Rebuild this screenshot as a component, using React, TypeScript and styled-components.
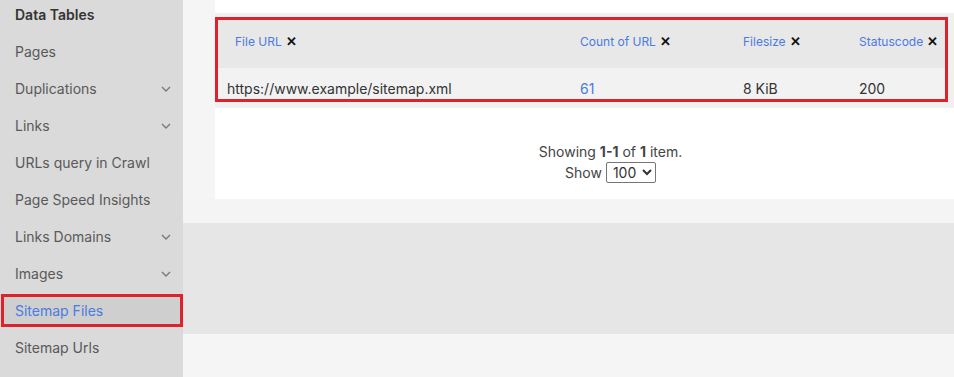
import React from 'react';
import styled, {createGlobalStyle} from "styled-components";

const GlobalStyle = createGlobalStyle`
    html, body {
        margin: 0;
        padding: 0;
        background: #f5f5f5;
        font-family: 'Inter', 'Noto Sans', sans-serif;
    }
`

type NavItem = { label: string, sub?: boolean, active?: boolean, title?: boolean }

const navItems: NavItem[] = [
    {label: 'Data Tables', title: true},
    {label: 'Pages'},
    {label: 'Duplications', sub: true},
    {label: 'Links', sub: true},
    {label: 'URLs query in Crawl'},
    {label: 'Page Speed Insights'},
    {label: 'Links Domains', sub: true},
    {label: 'Images', sub: true},
    {label: 'Sitemap Files', active: true},
    {label: 'Sitemap Urls'},
]

const columns = ['File URL', 'Count of URL', 'Filesize', 'Statuscode']

const Chevron = () => (
    <svg width="10" height="6" viewBox="0 0 10 6" fill="none">
        <path d="M1 1l4 4 4-4" stroke="#7a7a7a" strokeWidth="1.4"/>
    </svg>
)

export default function App() {
    return (
        <>
            <GlobalStyle/>
            <Page>
                <Sidebar>
                    <NavList>
                        {navItems.map(item => (
                            <NavRow key={item.label} active={item.active} heading={item.title}>
                                <span>{item.label}</span>
                                {item.sub && <Chevron/>}
                            </NavRow>
                        ))}
                    </NavList>
                </Sidebar>
                <Content>
                    <Card>
                        <TableWrap>
                            <Table>
                                <HeadRow>
                                    {columns.map((c, i) => (
                                        <HeadCell key={c} first={i === 0}>
                                            <span>{c}</span><Close>✕</Close>
                                        </HeadCell>
                                    ))}
                                </HeadRow>
                                <BodyRow>
                                    <Cell>https://www.example/sitemap.xml</Cell>
                                    <Cell><LinkText>61</LinkText></Cell>
                                    <Cell>8 KiB</Cell>
                                    <Cell>200</Cell>
                                </BodyRow>
                            </Table>
                        </TableWrap>
                        <Summary>
                            <div>Showing <b>1-1</b> of <b>1</b> item.</div>
                            <div>Show <Select defaultValue="100">
                                <option>10</option>
                                <option>50</option>
                                <option>100</option>
                            </Select></div>
                        </Summary>
                    </Card>
                    <Spacer/>
                    <Band/>
                </Content>
            </Page>
        </>
    );
}

const Page = styled.div`
    display: flex;
    width: 954px;
    height: 377px;
    overflow: hidden;
`
const Sidebar = styled.nav`
    width: 183px;
    flex-shrink: 0;
    background: #dadada;
`
const NavList = styled.div`
    display: flex;
    flex-direction: column;
    gap: 4px;
    margin-top: -2px;
`
const NavRow = styled.div<{ active?: boolean, heading?: boolean }>`
    height: 33px;
    display: flex;
    align-items: center;
    justify-content: space-between;
    padding: 0 12px 0 15px;
    font-size: 14px;
    color: ${p => p.active ? '#4a7be0' : p.heading ? '#333' : '#595959'};
    font-weight: ${p => p.heading ? 600 : 400};
    background: ${p => p.active ? '#cfcfcf' : 'transparent'};
    outline: ${p => p.active ? '3px solid #e0202b' : 'none'};
    outline-offset: -3px;
    margin-left: ${p => p.active ? '1px' : '0'};
    padding-left: ${p => p.active ? '14px' : '15px'};
`
const Content = styled.main`
    flex: 1;
    padding-left: 32px;
    display: flex;
    flex-direction: column;
    min-width: 0;
`
const Card = styled.section`
    background: #fff;
    height: 199px;
    padding-top: 13px;
    box-sizing: border-box;
    margin-right: -52px;
`
const TableWrap = styled.div`
    background: #f0f0f0;
    padding: 4px 0 6px;
`
const Table = styled.div`
    width: 733px;
    box-sizing: border-box;
    outline: 3px solid #e0202b;
    outline-offset: -3px;
    padding: 2px;
`
const HeadRow = styled.div`
    display: grid;
    grid-template-columns: 351px 163px 116px 1fr;
    height: 49px;
    box-sizing: border-box;
    padding-top: 14px;
    align-items: start;
    background: #e8e8e8;
`
const HeadCell = styled.div<{ first?: boolean }>`
    padding-left: ${p => p.first ? '18px' : '12px'};
    font-size: 12px;
    color: #4a7be0;
    display: flex;
    align-items: center;
    gap: 4px;
`
const Close = styled.span`
    color: #111;
    font-size: 13px;
    font-weight: 700;
`
const BodyRow = styled.div`
    display: grid;
    grid-template-columns: 351px 163px 116px 1fr;
    height: 32px;
    box-sizing: border-box;
    padding-top: 12px;
    align-items: start;
    background: #f2f2f2;
`
const Cell = styled.div`
    padding-left: 10px;
    font-size: 14px;
    line-height: 17px;
    color: #333;
    & + & {
        padding-left: 12px;
    }
`
const LinkText = styled.span`
    color: #4a7be0;
`
const Summary = styled.div`
    padding-top: 33px;
    text-align: center;
    font-size: 14px;
    color: #444;
    line-height: 21px;
    & b {
        font-weight: 700;
    }
`
const Select = styled.select`
    font-family: 'Inter', sans-serif;
    font-size: 14px;
    color: #333;
    border: 1px solid #767676;
    border-radius: 2px;
    background: #fff;
    height: 21px;
    padding: 0 2px;
`
const Spacer = styled.div`
    height: 24px;
    background: #f4f4f4;
    margin-left: -32px;
`
const Band = styled.div`
    height: 111px;
    background: #e6e6e6;
    margin-left: -32px;
`
